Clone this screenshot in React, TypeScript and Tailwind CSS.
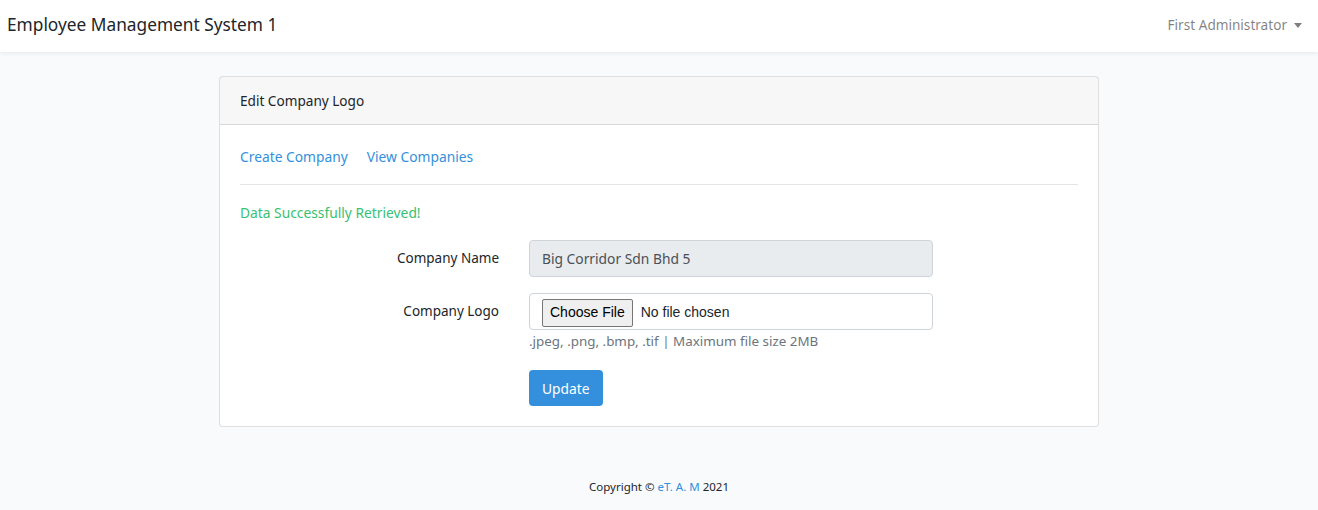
import React from 'react';

const font = { fontFamily: '"Noto Sans", "Open Sans", sans-serif' };
const sysFont = { fontFamily: '"Liberation Sans", Arial, sans-serif' };

const Navbar = () => (
  <nav className="flex h-[52px] items-center justify-between bg-white px-[7px] pb-[3px] shadow-[0_2px_4px_rgba(0,0,0,0.06)]">
    <a className="text-[17.3px] text-[#212529]">Employee Management System 1</a>
    <div className="flex items-center gap-[7px] pr-[9px] text-[13.6px] text-[rgba(0,0,0,0.5)]">
      <span>First Administrator</span>
      <span className="mt-[1px] h-0 w-0 border-x-[4.5px] border-t-[5px] border-x-transparent border-t-[rgba(0,0,0,0.5)]"></span>
    </div>
  </nav>
);

const FormRow = ({ label, children }: { label: string; children: React.ReactNode }) => (
  <div className="flex">
    <label className="w-[289px] pr-[15px] pt-[7px] text-right text-[13.5px] text-[#212529]">{label}</label>
    <div className="w-[434px] px-[15px]">{children}</div>
  </div>
);

export default function App() {
  return (
    <div className="min-h-[510px] bg-[#f8fafc] text-[13.8px] leading-[23px] text-[#212529]" style={font}>
      <Navbar />
      <main className="flex justify-center pt-[24px]">
        <div className="w-[880px] rounded-[4px] border border-[rgba(0,0,0,0.125)] bg-white">
          <div className="h-[48px] border-b border-[rgba(0,0,0,0.125)] bg-[rgba(0,0,0,0.03)] px-[20px] py-[12px] text-[13.6px]">
            Edit Company Logo
          </div>
          <div className="p-[20px]">
            <div className="flex gap-[19px] text-[#3490dc]">
              <a>Create Company</a>
              <a>View Companies</a>
            </div>
            <hr className="my-[16px] border-t border-[rgba(0,0,0,0.1)]" />
            <p className="text-[#38c172]">Data Successfully Retrieved!</p>
            <div className="-mx-[15px] mt-[16px] flex flex-col gap-[16px]">
              <FormRow label="Company Name">
                <div className="flex h-[37px] items-center rounded-[4px] border border-[#ced4da] bg-[#e9ecef] px-[12px] text-[#495057]">
                  Big Corridor Sdn Bhd 5
                </div>
              </FormRow>
              <FormRow label="Company Logo">
                <div className="flex h-[37px] items-center rounded-[4px] border border-[#ced4da] bg-white px-[12px] text-[#495057]">
                  <span
                    className="mr-[8px] mt-[2px] flex h-[28px] items-center rounded-[2px] border border-[#767676] bg-[#efefef] px-[7px] text-[14px] text-black"
                    style={sysFont}
                  >
                    Choose File
                  </span>
                  <span className="mt-[2px] text-[14px] text-[#212529]" style={sysFont}>
                    No file chosen
                  </span>
                </div>
                <div className="mt-[1px] text-[13.4px] leading-[20px] text-[#6c757d]">.jpeg, .png, .bmp, .tif | Maximum file size 2MB</div>
                <button className="mt-[19px] h-[36px] rounded-[4px] bg-[#3490dc] px-[13px] text-[13.8px] text-white">
                  Update
                </button>
              </FormRow>
            </div>
          </div>
        </div>
      </main>
      <footer className="pt-[48px] text-center text-[11.5px] text-[#212529]">
        Copyright © <span className="text-[#3490dc]">eT. A. M</span> 2021
      </footer>
    </div>
  );
}
